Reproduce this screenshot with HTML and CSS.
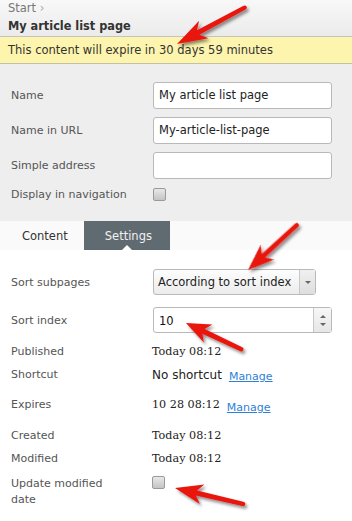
FILE: index.html
```html
<!DOCTYPE html>
<html>
<head>
<meta charset="utf-8">
<link rel="stylesheet" href="styles.css">
</head>
<body>
<div class="page">
  <div class="header">
    <div class="crumb">Start <span class="chev">›</span></div>
    <div class="title">My article list page</div>
  </div>
  <div class="notice">This content will expire in 30 days 59 minutes</div>
  <div class="form">
    <div class="row">
      <span class="label">Name</span>
      <div class="input">My article list page</div>
    </div>
    <div class="row">
      <span class="label">Name in URL</span>
      <div class="input">My-article-list-page</div>
    </div>
    <div class="row">
      <span class="label">Simple address</span>
      <div class="input"></div>
    </div>
    <div class="row row-check">
      <span class="label">Display in navigation</span>
      <span class="checkbox"></span>
    </div>
  </div>
  <div class="tabs">
    <span class="tab">Content</span>
    <span class="tab tab-active">Settings</span>
  </div>
  <div class="settings">
    <div class="row">
      <span class="label">Sort subpages</span>
      <div class="select"><span class="select-text">According to sort index</span><span class="select-btn"><span class="caret"></span></span></div>
    </div>
    <div class="row">
      <span class="label">Sort index</span>
      <div class="spinner"><span class="spin-text">10</span><span class="spin-btns"><span class="up"></span><span class="down"></span></span></div>
    </div>
    <div class="info info-1">
      <span class="label">Published</span>
      <span class="serif">Today 08:12</span>
    </div>
    <div class="info info-2">
      <span class="label">Shortcut</span>
      <span class="value"><span class="sans">No shortcut</span><a class="link link-1">Manage</a></span>
    </div>
    <div class="info info-3">
      <span class="label">Expires</span>
      <span class="value"><span class="serif">10 28 08:12</span><a class="link link-2">Manage</a></span>
    </div>
    <div class="info info-4">
      <span class="label">Created</span>
      <span class="serif">Today 08:12</span>
    </div>
    <div class="info info-5">
      <span class="label">Modified</span>
      <span class="serif">Today 08:12</span>
    </div>
    <div class="info info-6">
      <span class="label label-wrap">Update modified date</span>
      <span class="checkbox"></span>
    </div>
  </div>

  <svg class="arrows" width="352" height="521" viewBox="0 0 352 521">
    <defs>
      <filter id="sh" x="-20%" y="-20%" width="140%" height="140%">
        <feDropShadow dx="2" dy="2.5" stdDeviation="1.6" flood-color="#000" flood-opacity="0.45"/>
      </filter>
      <path id="arr" d="M0 0 L-24 -10 L-19 -2.6 L-60 -2.2 A2.2 2.2 0 0 0 -60 2.2 L-19 2.6 L-24 10 Z"/>
    </defs>
    <g fill="#e8150f" filter="url(#sh)">
      <g transform="translate(177 44) rotate(151.7) scale(1.27 1)"><use href="#arr"/></g>
      <g transform="translate(248 270) rotate(137.4) scale(1.1 1)"><use href="#arr"/></g>
      <g transform="translate(186 323) rotate(205.3) scale(1.02 1)"><use href="#arr"/></g>
      <g transform="translate(175 488) rotate(193.2) scale(1.16 1)"><use href="#arr"/></g>
    </g>
  </svg>
</div>
</body>
</html>
```
FILE: styles.css
```css
* { box-sizing: border-box; }
html, body { margin: 0; padding: 0; }
body {
  background: #fff;
  font-family: "DejaVu Sans", sans-serif;
  font-size: 11px;
  color: #333;
}
.page { position: relative; width: 352px; height: 521px; overflow: hidden; }

.header {
  height: 37px;
  padding: 1px 8px 0;
  background: linear-gradient(#f8f8f8, #ebebeb);
  border-bottom: 1px solid #c4c4c4;
}
.crumb { color: #777; font-size: 11.5px; line-height: 15px; }
.chev { color: #aaa; }
.title {
  font-family: "DejaVu Sans Condensed", "DejaVu Sans", sans-serif;
  font-weight: bold;
  font-size: 12.6px;
  line-height: 19px;
  color: #333;
}

.notice {
  height: 27px;
  padding: 0 8px;
  line-height: 26px;
  background: #fdf5ad;
  border-bottom: 1px solid #c2c0a6;
  font-size: 11.5px;
  color: #333;
}

.form {
  background: #eeeeee;
  padding: 18px 0 20px;
  display: flex;
  flex-direction: column;
  gap: 8px;
}
.row {
  display: grid;
  grid-template-columns: 142px 179px;
  align-items: center;
  padding-left: 11px;
}
.label { color: #555; font-size: 11px; }
.input {
  height: 27px;
  background: #fff;
  border: 1px solid #b9b9b9;
  border-radius: 3px;
  padding: 0 5px;
  line-height: 25px;
  font-size: 11.5px;
  color: #222;
}
.row-check { height: 14px; }
.checkbox {
  display: block;
  width: 13px;
  height: 13px;
  border: 1px solid #9a9a9a;
  border-radius: 2px;
  background: linear-gradient(#e8e8e8, #c4c4c4);
}

.tabs {
  height: 29px;
  display: flex;
  align-items: stretch;
  background: #fafafa;
  padding-left: 22px;
}
.tab {
  font-size: 11.5px;
  color: #333;
  line-height: 31px;
}
.tab-active {
  position: relative;
  margin-left: 16px;
  width: 86px;
  padding-left: 21px;
  background: #606b71;
  color: #f0f0f0;
}
.tab-active::after {
  content: "";
  position: absolute;
  left: 38px;
  bottom: 0;
  border-left: 5px solid transparent;
  border-right: 5px solid transparent;
  border-bottom: 5px solid #fff;
}

.settings {
  padding-top: 19px;
  display: flex;
  flex-direction: column;
}
.settings .row + .row { margin-top: 12px; }
.select {
  width: 163px;
  height: 26px;
  display: flex;
  border: 1px solid #b9b9b9;
  border-radius: 3px;
  background: linear-gradient(#fdfdfd, #ececec);
}
.select-text { flex: 1; line-height: 24px; padding-left: 4px; font-size: 11.5px; color: #222; white-space: nowrap; overflow: hidden; }
.select-btn {
  width: 16px;
  flex: none;
  border-left: 1px solid #c8c8c8;
  background: linear-gradient(#f0f0f0, #dedede);
  display: flex;
  align-items: center;
  justify-content: center;
}
.caret {
  border-left: 3px solid transparent;
  border-right: 3px solid transparent;
  border-top: 3px solid #666;
}
.spinner {
  height: 26px;
  display: flex;
  border: 1px solid #b9b9b9;
  border-radius: 3px;
  background: #fff;
}
.spin-text { flex: 1; line-height: 26px; padding-left: 5px; font-size: 11.5px; color: #111; }
.spin-btns {
  width: 18px;
  border-left: 1px solid #c8c8c8;
  background: linear-gradient(#f7f7f7, #e6e6e6);
  display: flex;
  flex-direction: column;
  align-items: center;
  justify-content: center;
  gap: 5px;
}
.up { border-left: 3px solid transparent; border-right: 3px solid transparent; border-bottom: 3px solid #666; }
.down { border-left: 3px solid transparent; border-right: 3px solid transparent; border-top: 3px solid #666; }

.info {
  display: grid;
  grid-template-columns: 141px 180px;
  align-items: start;
  padding-left: 11px;
  line-height: 20px;
}
.info-1 { margin-top: 9px; height: 23px; }
.info-2 { height: 30px; }
.info-3 { height: 31px; }
.info-4 { height: 23px; }
.info-5 { height: 25px; }
.info-6 { line-height: 16px; }
.label-wrap { display: block; width: 110px; padding-top: 2px; }
.info-6 .checkbox { margin-top: 2px; }
.serif { font-family: "DejaVu Serif", serif; font-size: 11.2px; color: #222; }
.sans { font-size: 12px; color: #222; }
.value { display: flex; align-items: flex-start; }
.link {
  color: #2f7fd8;
  text-decoration: underline;
  font-size: 11px;
  position: relative;
  top: 2px;
}
.link-1 { margin-left: 7px; }
.link-2 { margin-left: 7px; top: 3px; }

.arrows { position: absolute; left: 0; top: 0; pointer-events: none; }
```
